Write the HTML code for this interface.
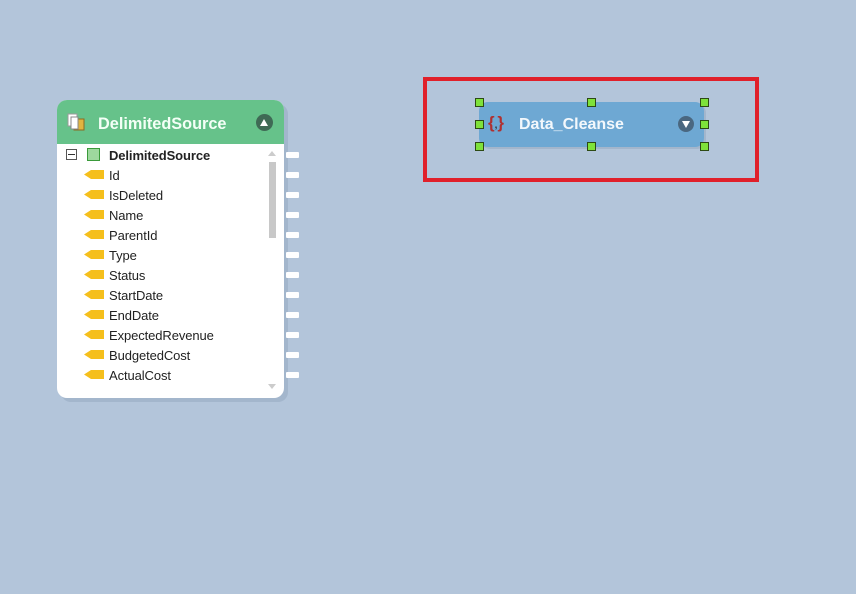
<!DOCTYPE html>
<html><head><style>
body{margin:0;width:856px;height:594px;background:#b3c5da;position:relative;overflow:hidden;font-family:"Liberation Sans",Arial,sans-serif;}
.abs{position:absolute}
.card{left:57px;top:100px;width:227px;height:298px;background:#fff;border-radius:10px;overflow:hidden;box-shadow:4px 4px 0 #a3b6cc}
.hdr{left:0;top:0;width:227px;height:44px;background:#66c28a;}
.row{position:absolute;left:52px;font-size:13px;color:#222;letter-spacing:-0.1px}
.tag{position:absolute;left:27px;width:20px;height:9px;background:#f5bf1c;clip-path:polygon(35% 0,100% 0,100% 100%,35% 100%,0 50%)}
.con{position:absolute;left:286px;width:13px;height:6px;background:#fff;border-radius:1px}
.h{position:absolute;width:7px;height:7px;background:#7ee23a;border:1px solid #2d4a14}
</style></head><body>
<div class="abs card">
 <div class="abs hdr"></div>
 <svg class="abs" style="left:10px;top:12px" width="20" height="20"><rect x="1" y="2" width="9" height="12" fill="#fff" stroke="#999"/><rect x="7" y="7" width="10" height="11" fill="#e0b440" stroke="#8a6a20"/><rect x="4" y="5" width="7" height="12" fill="#fff" stroke="#888"/></svg>
 <div class="abs" style="left:41px;top:15px;font-size:16.3px;font-weight:bold;color:#f3fff6">DelimitedSource</div>
 <div class="abs" style="left:199px;top:14px;width:17px;height:17px;border-radius:50%;background:#3f6a55"></div>
 <div class="abs" style="left:203px;top:19px;width:0;height:0;border-left:4.5px solid transparent;border-right:4.5px solid transparent;border-bottom:7px solid #fff"></div>
 <div class="abs" style="left:9px;top:49px;width:9px;height:9px;border:1px solid #555;"></div>
 <div class="abs" style="left:11px;top:54px;width:7px;height:1px;background:#333"></div>
 <div class="abs" style="left:30px;top:48px;width:11px;height:11px;border:1px solid #3a9a3a;background:#9ed89e"></div>
 <div class="row" style="left:52px;top:48px;font-weight:bold">DelimitedSource</div>
 <div class="abs" style="left:211px;top:51px;border-left:4px solid transparent;border-right:4px solid transparent;border-bottom:5px solid #ccc"></div>
 <div class="abs" style="left:212px;top:62px;width:7px;height:76px;background:#c8c8c8"></div>
 <div class="abs" style="left:211px;top:284px;border-left:4px solid transparent;border-right:4px solid transparent;border-top:5px solid #ccc"></div>
</div>
<div id="rows"></div>
<script>
var n=["Id","IsDeleted","Name","ParentId","Type","Status","StartDate","EndDate","ExpectedRevenue","BudgetedCost","ActualCost"],h="";
for(var i=0;i<n.length;i++){var y=168+i*20;h+='<div class="tag" style="left:84px;top:'+(y+2)+'px"></div><div class="row" style="left:109px;top:'+(y)+'px">'+n[i]+'</div>';}
for(var i=0;i<12;i++){h+='<div class="con" style="top:'+(152+i*20)+'px"></div>';}
document.getElementById('rows').innerHTML=h;
</script>
<div class="abs" style="left:423px;top:77px;width:328px;height:97px;border:4px solid #e0202a"></div>
<div class="abs" style="left:481px;top:104px;width:225px;height:45px;border-radius:9px;background:#a3b6cc"></div>
<div class="abs" style="left:479px;top:102px;width:225px;height:45px;border-radius:9px;background:#6ea8d3"></div>
<div class="abs" style="left:488px;top:113px;font-size:17px;color:#b03030;font-weight:bold">{<span style="font-size:10px;color:#333">,</span>}</div>
<div class="abs" style="left:519px;top:116px;font-size:16px;font-weight:bold;color:#f3f8fc">Data_Cleanse</div>
<div class="abs" style="left:678px;top:116px;width:16px;height:16px;border-radius:50%;background:#4a6780"></div>
<div class="abs" style="left:682px;top:121px;border-left:4px solid transparent;border-right:4px solid transparent;border-top:7px solid #fff"></div>
<div class="h" style="left:475px;top:98px"></div><div class="h" style="left:587px;top:98px"></div><div class="h" style="left:700px;top:98px"></div>
<div class="h" style="left:475px;top:120px"></div><div class="h" style="left:700px;top:120px"></div>
<div class="h" style="left:475px;top:142px"></div><div class="h" style="left:587px;top:142px"></div><div class="h" style="left:700px;top:142px"></div>
</body></html>
